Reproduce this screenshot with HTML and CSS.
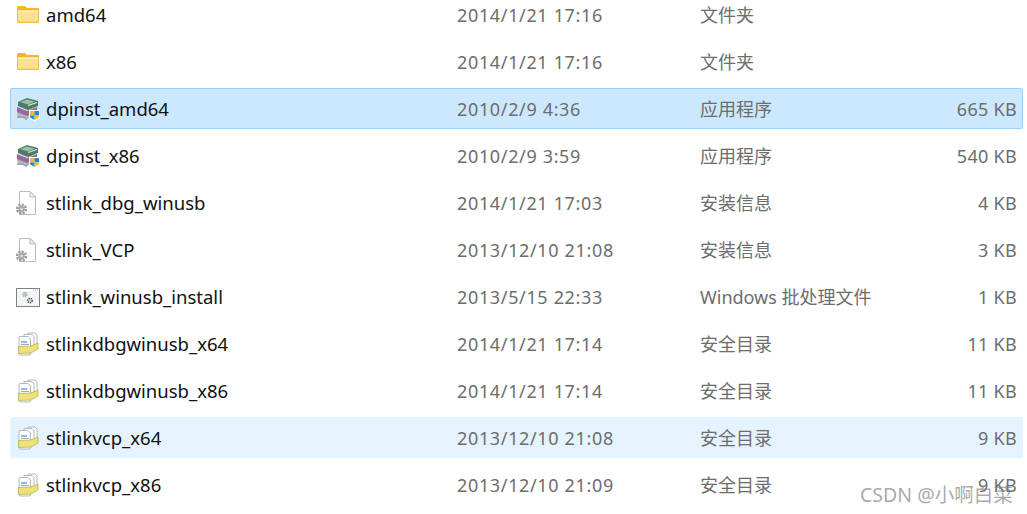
FILE: index.html
```html
<!DOCTYPE html>
<html lang="zh-CN">
<head>
    <meta charset="UTF-8">
    <meta name="viewport" content="width=device-width, initial-scale=1.0">
    <title>stlink</title>
    <link rel="stylesheet" href="styles.css">
</head>
<body>
    <svg class="defs" width="0" height="0" aria-hidden="true">
        <symbol id="i-folder" viewBox="0 0 24 24">
            <path d="M1 4.500 Q1 3 2.500 3 H9 L11 5 H22 Q23 5 23 6 V8 H1Z" fill="#f5b52c"/>
            <path d="M1 7 H23 V19 Q23 20 22 20 H2 Q1 20 1 19Z" fill="#f3c04f"/>
            <path d="M2 7.500 H22 V18.600 H2Z" fill="#ffe08f"/>
            <path d="M2 7.500 H22 V9 H2Z" fill="#fff0c4"/>
        </symbol>
        <symbol id="i-setup" viewBox="0 0 24 24">
            <path d="M1 14 L11 18 L20 14 V18 L11 22 L1 18Z" fill="#b4b8bd"/>
            <path d="M1 10 L11 14 L21 10 V15 L11 19 L1 15Z" fill="#96689f"/>
            <path d="M2 10 L11 13.500 L20 10 L11 8Z" fill="#d9c2df"/>
            <path d="M2 5 L11 1 L22 4 V9 L12 13 L2 9Z" fill="#4d7a62"/>
            <path d="M4 5 L11 2.500 L19 4.500 L12 7.500Z" fill="#9cc0a7"/>
            <path d="M12 8.500 L21 5.500" stroke="#dfe7e1" stroke-width="1.200"/>
            <path d="M1 20 H7 L11 22.500" stroke="#a3a7ac" stroke-width="2" fill="none"/>
            <path d="M13 13 H24 V20.500 L18.500 24 L13 20.500Z" fill="#fff"/>
            <path d="M14 14 H18.500 V18.500 H14Z" fill="#f2bd1d"/>
            <path d="M18.500 14 H23 V18.500 H18.500Z" fill="#1f87d6"/>
            <path d="M14 18.500 H18.500 V23 L14 20.300Z" fill="#1f87d6"/>
            <path d="M18.500 18.500 H23 V20.300 L18.500 23Z" fill="#f2bd1d"/>
        </symbol>
        <symbol id="i-inf" viewBox="0 0 24 24">
            <path d="M3.500 .5 H14 L19.500 6 V23.500 H3.500Z" fill="#fff" stroke="#b9bcc0"/>
            <path d="M14 .5 V6 H19.500Z" fill="#eceef0" stroke="#b9bcc0"/>
            <circle cx="5.500" cy="18" r="4.300" fill="none" stroke="#9a9fa3" stroke-width="2.600" stroke-dasharray="2.200 1.100"/>
            <circle cx="5.500" cy="18" r="3.200" fill="#a5aaae"/>
            <circle cx="5.500" cy="18" r="1.300" fill="#e0e2e4"/>
        </symbol>
        <symbol id="i-bat" viewBox="0 0 24 24">
            <rect x=".5" y="3.500" width="23" height="18" fill="#f3f4f5" stroke="#7e8286"/>
            <path d="M1 4 H23 V6 H1Z" fill="#fff"/>
            <path d="M17 5 H23" stroke="#9ea2a6" stroke-dasharray="1 1"/>
            <circle cx="9" cy="9.500" r="2" fill="#c3c6ca" stroke="#a9adb1" stroke-width="1.500" stroke-dasharray="1.100 .7"/>
            <circle cx="14" cy="15.500" r="2.100" fill="#e6e8ea" stroke="#5a5e62" stroke-width="1.800" stroke-dasharray="1.200 .7"/>
        </symbol>
        <symbol id="i-cat" viewBox="0 0 24 24">
            <path d="M12 1 H19 L21 3 V13 H12Z" fill="#fff" stroke="#b3b6ba"/>
            <path d="M8 2.500 H16 L18 4.500 V14 H8Z" fill="#fff" stroke="#b3b6ba"/>
            <path d="M3.500 4.500 H12 L14.500 7 V22 Q14.500 23 13 23 H4.500 Q3 23 3 22 V5Z" fill="#fdfdfd" stroke="#b3b6ba"/>
            <path d="M2.500 14.500 L15 14 L22 11 V17 L15 21 L2.500 21.500Z" fill="#ece27a" stroke="#b8ab43" stroke-width=".7"/>
            <path d="M5 10 H11" stroke="#4e90c8" stroke-width="1.200"/>
            <path d="M5 12.500 H13" stroke="#a7abaf"/>
        </symbol>
    </svg>

    <ul class="file-list">
        <li class="file-row">
            <svg class="file-icon"><use href="#i-folder"/></svg>
            <span class="file-name">amd64</span>
            <span class="file-date">2014/1/21 17:16</span>
            <span class="file-type">文件夹</span>
            <span class="file-size"></span>
        </li>
        <li class="file-row">
            <svg class="file-icon"><use href="#i-folder"/></svg>
            <span class="file-name">x86</span>
            <span class="file-date">2014/1/21 17:16</span>
            <span class="file-type">文件夹</span>
            <span class="file-size"></span>
        </li>
        <li class="file-row selected">
            <svg class="file-icon"><use href="#i-setup"/></svg>
            <span class="file-name">dpinst_amd64</span>
            <span class="file-date">2010/2/9 4:36</span>
            <span class="file-type">应用程序</span>
            <span class="file-size">665 KB</span>
        </li>
        <li class="file-row">
            <svg class="file-icon"><use href="#i-setup"/></svg>
            <span class="file-name">dpinst_x86</span>
            <span class="file-date">2010/2/9 3:59</span>
            <span class="file-type">应用程序</span>
            <span class="file-size">540 KB</span>
        </li>
        <li class="file-row">
            <svg class="file-icon"><use href="#i-inf"/></svg>
            <span class="file-name">stlink_dbg_winusb</span>
            <span class="file-date">2014/1/21 17:03</span>
            <span class="file-type">安装信息</span>
            <span class="file-size">4 KB</span>
        </li>
        <li class="file-row">
            <svg class="file-icon"><use href="#i-inf"/></svg>
            <span class="file-name">stlink_VCP</span>
            <span class="file-date">2013/12/10 21:08</span>
            <span class="file-type">安装信息</span>
            <span class="file-size">3 KB</span>
        </li>
        <li class="file-row">
            <svg class="file-icon"><use href="#i-bat"/></svg>
            <span class="file-name">stlink_winusb_install</span>
            <span class="file-date">2013/5/15 22:33</span>
            <span class="file-type">Windows 批处理文件</span>
            <span class="file-size">1 KB</span>
        </li>
        <li class="file-row">
            <svg class="file-icon"><use href="#i-cat"/></svg>
            <span class="file-name">stlinkdbgwinusb_x64</span>
            <span class="file-date">2014/1/21 17:14</span>
            <span class="file-type">安全目录</span>
            <span class="file-size">11 KB</span>
        </li>
        <li class="file-row">
            <svg class="file-icon"><use href="#i-cat"/></svg>
            <span class="file-name">stlinkdbgwinusb_x86</span>
            <span class="file-date">2014/1/21 17:14</span>
            <span class="file-type">安全目录</span>
            <span class="file-size">11 KB</span>
        </li>
        <li class="file-row hovered">
            <svg class="file-icon"><use href="#i-cat"/></svg>
            <span class="file-name">stlinkvcp_x64</span>
            <span class="file-date">2013/12/10 21:08</span>
            <span class="file-type">安全目录</span>
            <span class="file-size">9 KB</span>
        </li>
        <li class="file-row">
            <svg class="file-icon"><use href="#i-cat"/></svg>
            <span class="file-name">stlinkvcp_x86</span>
            <span class="file-date">2013/12/10 21:09</span>
            <span class="file-type">安全目录</span>
            <span class="file-size">9 KB</span>
        </li>
    </ul>

    <div class="watermark">CSDN @小啊白菜</div>
</body>
</html>
```

FILE: styles.css
```css
html, body {
    margin: 0;
    height: 100%;
    overflow: hidden;
    background-color: #fff;
}

body {
    font-family: "Noto Sans", "Noto Sans CJK SC", sans-serif;
    font-size: 18px;
    color: #6d6d6d;
}

.defs {
    display: block;
    height: 0;
}

/* Explorer file rows, the first one is cut by the top of the window */
.file-list {
    list-style: none;
    margin: -6px 4px 0 10px;
    padding: 0;
    display: flex;
    flex-direction: column;
    gap: 6px;
}

.file-row {
    display: grid;
    grid-template-columns: 30px 411px 243px 1fr auto;
    align-items: center;
    height: 41px;
    padding: 0 5px;
    box-sizing: border-box;
    border: 1px solid transparent;
    border-radius: 2px;
}

.file-row.selected {
    background-color: #cce8ff;
    border-color: #99d1ff;
}

.file-row.hovered {
    background-color: #e5f3ff;
    border-color: #e5f3ff;
}

.file-icon {
    width: 24px;
    height: 24px;
}

.file-name {
    font-size: 18.5px;
    color: #111;
}

.file-date {
    letter-spacing: 0.65px;
}

.file-type {
    padding-bottom: 2px;
}

.file-size {
    text-align: right;
    letter-spacing: 0.3px;
}

.watermark {
    position: absolute;
    left: 860px;
    top: 479px;
    font-size: 19.5px;
    color: rgba(130, 130, 130, 0.7);
}
```
